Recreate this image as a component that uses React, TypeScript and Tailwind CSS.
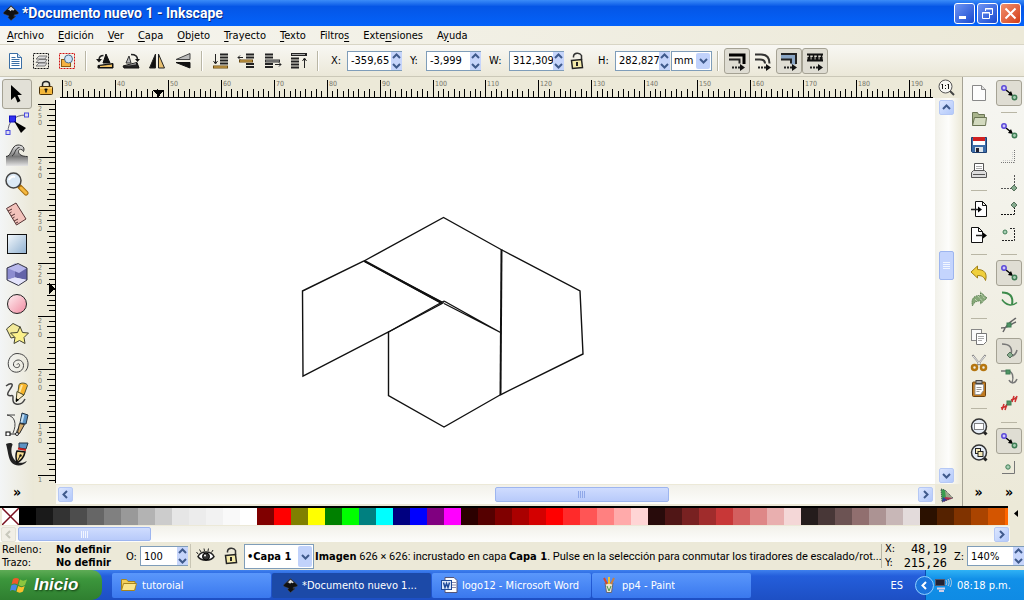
import { useState } from 'react';
import type { ReactNode } from 'react';

type Kids = { children?: ReactNode };

function Icon({ children }: Kids) {
  return (
    <svg viewBox="0 0 24 24" className="size-6 shrink-0" fill="none" stroke="#222" aria-hidden="true">
      {children}
    </svg>
  );
}

/* ---------- toolbar icons ---------- */

const DocIcon = () => (
  <Icon>
    <path d="M6.500 4.500h8l4 4v11h-12z" fill="#fff" stroke="#3a6ea5" />
    <path d="M14.500 4.500v4h4" fill="#cfe0f2" stroke="#3a6ea5" />
    <path d="M8.500 8.500h4M8.500 10.500h8M8.500 12.500h8M8.500 14.500h8M8.500 16.500h8" stroke="#3a6ea5" />
  </Icon>
);
const LayersIcon = () => (
  <Icon>
    <rect x="4.500" y="4.500" width="15" height="15" strokeDasharray="2 1" stroke="#111" />
    <path d="M7 17l3-3h8l-2 3zM7 13.500l3-3h8l-2 3zM7 10l3-3h8l-2 3z" fill="#ddd" stroke="#777" />
  </Icon>
);
const SelectSameIcon = () => (
  <Icon>
    <rect x="4.500" y="4.500" width="15" height="15" strokeDasharray="2 1" stroke="#d01010" />
    <rect x="6.500" y="10.500" width="9" height="7" fill="#f5b040" stroke="#8a5a10" />
    <circle cx="13.500" cy="10" r="4" fill="#cfe4f7" stroke="#4a6a8a" />
  </Icon>
);
const RotateLeftIcon = () => (
  <Icon>
    <path d="M13 5l4 9H10z" fill="#111" stroke="#111" />
    <path d="M5 16.500l15-2v4.500H5z" fill="#111" stroke="#111" />
    <path d="M7 17l12-1.500V18H7z" fill="#f0c060" stroke="none" />
    <path d="M6 11c0-3.500 2-4.500 4.500-4.500" strokeWidth="1.500" />
    <path d="M3 10h6l-3 3.500z" fill="#111" stroke="none" />
  </Icon>
);
const RotateRightIcon = () => (
  <Icon>
    <path d="M10 7l2 7H7z" fill="#bbb" stroke="#333" />
    <path d="M4 17l14-3.500 2 5.500H5z" fill="#222" stroke="#111" />
    <path d="M6 17l11-3v1.500z" fill="#999" stroke="none" />
    <path d="M12 5.500c4 0 6.500 1 6.500 5" strokeWidth="1.500" />
    <path d="M16 10h5l-2.500 3z" fill="#111" stroke="none" />
  </Icon>
);
const FlipHIcon = () => (
  <Icon>
    <path d="M10.500 5v14H4.500z" fill="#111" />
    <path d="M13.500 5v14h6z" fill="#e8c070" />
  </Icon>
);
const FlipVIcon = () => (
  <Icon>
    <path d="M19 4.500v6H5z" fill="#bbb" stroke="#444" />
    <path d="M5 13.500h14v5.500z" fill="#111" stroke="#111" />
  </Icon>
);
const ToBottomIcon = () => (
  <Icon>
    <path d="M6.500 5v9M4.500 12l2 3 2-3" />
    <path d="M11 5.500h8M11 8.500h8M11 11.500h8M11 14.500h8" strokeWidth="2" />
    <path d="M4 18h15" stroke="#6a4a10" strokeWidth="3" />
    <path d="M5 18h13" stroke="#f0c060" />
  </Icon>
);
const LowerIcon = () => (
  <Icon>
    <path d="M11 5.500h8M11 8.500h8M11 15h8M11 18h8" strokeWidth="2" />
    <path d="M4 12h14" stroke="#6a4a10" strokeWidth="3" />
    <path d="M5 12h12" stroke="#f0c060" />
    <path d="M3 8.500h5M5 6.500L3 8.500l2 2" />
  </Icon>
);
const RaiseIcon = () => (
  <Icon>
    <path d="M4 5.500h8M4 8.500h8M4 15h8M4 18h8" strokeWidth="2" />
    <path d="M4 12h15" stroke="#333" strokeWidth="3" />
    <path d="M5 12h13" stroke="#aaa" />
    <path d="M14 15.500h6M18 13.500l2 2-2 2" />
  </Icon>
);
const ToTopIcon = () => (
  <Icon>
    <path d="M4 5.500h16" strokeWidth="3" />
    <path d="M5 5.500h13" stroke="#aaa" />
    <path d="M4 9.500h8M4 12.500h8M4 15.500h8M4 18.500h8" strokeWidth="2" />
    <path d="M17.500 19v-9M15.500 12l2-3 2 3" />
  </Icon>
);
const OpenLockIcon = () => (
  <Icon>
    <path d="M8.500 8.500V7c.5-3 6-4 8-.5V11" stroke="#333" strokeWidth="1.500" />
    <path d="M6.500 11.500l10-1 1 8-10 1z" fill="#f3e9a8" stroke="#222" strokeWidth="1.500" />
    <path d="M12 13v4" stroke="#222" strokeWidth="2" />
  </Icon>
);
const DashArrow = () => (
  <>
    <path d="M7 18.500h8" strokeDasharray="2 1" strokeWidth="2" />
    <path d="M15 15l5 3.500-5 3.500z" fill="#111" stroke="none" />
  </>
);
const ScaleStrokeIcon = () => (
  <Icon>
    <path d="M4 6h15v9" stroke="#000" strokeWidth="3" />
    <path d="M4 10.500h10.500v4" strokeWidth="2" />
    <DashArrow />
  </Icon>
);
const ScaleRadiiIcon = () => (
  <Icon>
    <path d="M4 5.500h6c6 0 8.500 4 8.500 9" stroke="#333" strokeWidth="2" />
    <path d="M4 10.500h5c4 0 5 2 5 4" stroke="#333" strokeWidth="2" />
    <DashArrow />
  </Icon>
);
const MoveGradientIcon = () => (
  <Icon>
    <path d="M4 5.500h15v10h-5v-5H4z" fill="#89a5c5" stroke="none" />
    <path d="M4 5h15v10M4 10.500h10v4" stroke="#222" strokeWidth="2" />
    <DashArrow />
  </Icon>
);
const MovePatternIcon = () => (
  <Icon>
    <path d="M4 5.500h16M4 11.500h16" stroke="#111" strokeWidth="2" />
    <path d="M6.500 6v6M10.500 6v6M14.500 6v6M18.500 6v6" stroke="#111" strokeWidth="1.500" />
    <path d="M4.500 9.500h4M8.500 9.500h4M12.500 9.500h4M16.500 9.500h4" stroke="#111" strokeWidth="3" strokeDasharray="3 1" />
    <DashArrow />
  </Icon>
);

/* ---------- toolbox icons ---------- */

const PointerIcon = () => (
  <Icon>
    <path d="M6 3l11 10h-4.500l3 6-3 1.500-2.500-6-4 3.500z" fill="#000" stroke="none" />
  </Icon>
);
const NodeIcon = () => (
  <Icon>
    <path d="M3 20C3 10 9 3 21 3" stroke="#667" />
    <rect x="1" y="18.500" width="4" height="4" fill="#dde" stroke="#4a4ae0" />
    <rect x="19.500" y="1" width="4" height="4" fill="#dde" stroke="#4a4ae0" />
    <rect x="4.500" y="4" width="6" height="6" fill="#3030f0" stroke="#1010c0" />
    <path d="M9 9l12 7-5 5z" fill="#000" stroke="none" />
  </Icon>
);
const TweakIcon = () => (
  <Icon>
    <defs>
      <linearGradient id="wave" x1="0" y1="0" x2="0" y2="1">
        <stop offset="0" stopColor="#e4e4e4" />
        <stop offset="0.550" stopColor="#777" />
        <stop offset="1" stopColor="#e4e4e4" />
      </linearGradient>
    </defs>
    <path d="M1 14.500c6 0 5-11.500 12-11.500 5 0 7 3 5.500 6-1-4-6-3-5 1 1 3 4 4.500 9.500 4.500V24H1z" fill="url(#wave)" stroke="none" />
    <path d="M1 14.500c6 0 5-11.500 12-11.500 5 0 7 3 5.500 6.500-1-.5-1-2-2-2.500M22.500 14.500c-5.500 0-9-2-9-5 0-2 2-3 3.500-1.500M7 14c3-1 3-8.500 7.500-8.500" stroke="#333" />
  </Icon>
);
const ZoomIcon = () => (
  <Icon>
    <path d="M15 15l6 6" stroke="#a87010" strokeWidth="5" strokeLinecap="round" />
    <path d="M16 16l5 5" stroke="#f5b840" strokeWidth="3" strokeLinecap="round" />
    <circle cx="8.500" cy="8.500" r="7.500" fill="#dbe9f6" stroke="#444" strokeWidth="1.500" />
    <path d="M4 8c1-3 4-4 6-3" stroke="#fff" strokeWidth="2" />
  </Icon>
);
const MeasureIcon = () => (
  <Icon>
    <path d="M1.500 6.500L11 1l10 16-9.500 6z" fill="#f2c2bb" stroke="#533" />
    <path d="M3 9l4-2M4.500 11.500l2-1.500M6 14l4-2M7.500 16.500l2-1.500M9 19l4-2M11 21l2-1" stroke="#533" />
  </Icon>
);
const RectIcon = () => (
  <Icon>
    <defs>
      <linearGradient id="rectFill" x1="0" y1="0" x2="1" y2="1">
        <stop offset="0" stopColor="#f4f9fd" />
        <stop offset="1" stopColor="#8fb0d0" />
      </linearGradient>
    </defs>
    <rect x="2.500" y="2.500" width="19" height="19" fill="url(#rectFill)" stroke="#111" />
  </Icon>
);
const BoxIcon = () => (
  <Icon>
    <path d="M2 6l8-4.500v14L2 18z" fill="#8c8cd0" stroke="none" />
    <path d="M10 1.500L22 6v12l-12-2.500z" fill="#6464a8" stroke="none" />
    <path d="M10 1.500L22 6l-8 5-12-5z" fill="#b8b8ec" stroke="none" />
    <path d="M2 18l8-2.500L22 18l-9 5.500z" fill="#e4e4fc" stroke="none" />
    <path d="M13 1.500L22 6v12l-8.500 5.500L2 18V6z" stroke="#334" />
  </Icon>
);
const CircleIcon = () => (
  <Icon>
    <defs>
      <linearGradient id="ball" x1="0" y1="0" x2="1" y2="1">
        <stop offset="0" stopColor="#fff0f2" />
        <stop offset="1" stopColor="#f08aa0" />
      </linearGradient>
    </defs>
    <circle cx="12" cy="12" r="9.500" fill="url(#ball)" stroke="#222" />
  </Icon>
);
const StarIcon = () => (
  <Icon>
    <path d="M1.500 7L8 1.500 15 5v9l-9 2z" fill="#f3ea9a" stroke="#443" />
    <path d="M15 4.500l2.500 6 6 .5-4.500 4.500 1 6-5.500-3-5.500 3 1-6L5.500 11l7-.5z" fill="#fbf08a" stroke="#443" />
  </Icon>
);
const SpiralIcon = () => (
  <Icon>
    <path d="M12 12.500c1.500-2 3 0 2.500 1.500-1 2.500-5.500 2-6-1-.5-4 4-6 7-4.500 4 2 4 8 0 10.500-5 3-11 0-12-5C2 8 6.500 1.500 12 1.500c7 0 11.500 5 11 11.500-.2 3-1.500 5-3 6.500" stroke="#444" />
  </Icon>
);
const PencilIcon = () => (
  <Icon>
    <path d="M1 4c4-3 7-3 6 0S1 11 3 13s5-1 5 2-1 6 3 7 7-1 9-5" stroke="#444" strokeWidth="1.500" />
    <path d="M14 2.500C16 0 22 1 22.500 3.500L19 13l-7 4z" fill="#f7b52c" stroke="#553" />
    <path d="M17 3l-4 11" stroke="#fde6a0" strokeWidth="2" />
    <path d="M12 9.500l-1 10 8-6.500z" fill="#fbeac0" stroke="#442" />
    <path d="M11 16v4l3-2z" fill="#000" stroke="none" />
  </Icon>
);
const BezierIcon = () => (
  <Icon>
    <path d="M2 3c8 1 10 9 6 18M2 3h8M12 22c-2-3 3-6 3-10" stroke="#444" />
    <path d="M4 22h9" />
    <rect x="1" y="20" width="4" height="4" fill="#fff" stroke="#000" />
    <path d="M17 1l6 2-2 9-6-1z" fill="#5b93c4" stroke="#234" />
    <path d="M18.500 2.500l-2 8" stroke="#c5dff2" strokeWidth="2" />
    <path d="M14.500 11.500l5 1-5 9-2-1z" fill="#d8b070" stroke="#222" />
    <circle cx="12" cy="22" r="1.500" fill="#fff" />
  </Icon>
);
const CalligraphyIcon = () => (
  <Icon>
    <path d="M1 2c4-2 8-1 6 2-2 7 1 13 5 16 4 2 8 0 10-1-3 5-11 6-15 2C3 17 3 8 1 2z" fill="#222" stroke="none" />
    <path d="M14 1h9l-2 6-7-1z" fill="#5b93c4" stroke="#234" />
    <path d="M13 6.500l8 1.500" stroke="#c82020" strokeWidth="2" />
    <path d="M12 9l8 1c-1 5-3 8-8 11-1-4-2-8 0-12z" fill="#f7dc90" stroke="#111" strokeWidth="1.500" />
    <path d="M12 20l3-6" stroke="#111" />
    <circle cx="15.500" cy="13.500" r="1.200" fill="#111" stroke="none" />
  </Icon>
);

/* ---------- command bar icons ---------- */

const NewIcon = () => (
  <Icon>
    <path d="M5.500 4.500h9l4 4v11h-13z" fill="#fdfdfd" stroke="#888" />
    <path d="M14.500 4.500v4h4" fill="#ddd" stroke="#888" />
  </Icon>
);
const OpenIcon = () => (
  <Icon>
    <path d="M5.500 18.500v-13h5l1 2h6v3" fill="#a9b48c" stroke="#6a7454" />
    <path d="M5.500 18.500l2-8h12l-1 8z" fill="#d3dabf" stroke="#6a7454" />
  </Icon>
);
const SaveIcon = () => (
  <Icon>
    <path d="M4.500 4.500h15v15h-14l-1-1z" fill="#3c6ca8" stroke="#1e3f70" />
    <rect x="6" y="5" width="12" height="7" fill="#fff" stroke="none" />
    <rect x="6" y="4" width="12" height="4" fill="#d02020" stroke="none" />
    <rect x="8" y="14" width="8" height="5" fill="#dde4ea" stroke="none" />
    <rect x="9" y="15" width="3" height="4" fill="#223" stroke="none" />
  </Icon>
);
const PrintIcon = () => (
  <Icon>
    <path d="M7.500 12V4.500h9V12" fill="#fff" stroke="#555" />
    <path d="M9 7.500h6M9 9.500h6" stroke="#aaa" />
    <path d="M4.500 13.500l2-2h11l2 2v5h-15z" fill="#ddd" stroke="#555" />
    <path d="M6 15.500h12" stroke="#555" />
  </Icon>
);
const ImportIcon = () => (
  <Icon>
    <path d="M8.500 4.500h7l4 4v11h-11z M15.500 4.500v4h4" fill="#fff" stroke="#111" />
    <path d="M4 12.500h9" strokeWidth="1.500" />
    <path d="M11 9.500l4 3-4 3z" fill="#000" stroke="none" />
  </Icon>
);
const ExportIcon = () => (
  <Icon>
    <path d="M4.500 4.500h7l4 4v11h-11z M11.500 4.500v4h4" fill="#fff" stroke="#111" />
    <path d="M9 12.500h8" strokeWidth="1.500" />
    <path d="M16 9.500l4 3-4 3z" fill="#000" stroke="none" />
  </Icon>
);
const UndoIcon = () => (
  <Icon>
    <path d="M4 11l6.500-6v3.500c7 0 10 4 8 11-1.500-4-4-5-8-5V17z" fill="#f0cf3c" stroke="#a08018" />
  </Icon>
);
const RedoIcon = () => (
  <Icon>
    <path d="M20 11l-6.500-6v3.500C7 8 3.500 12 5.500 19c1.500-4 4-5 8-5v3z" fill="#86a878" stroke="#4c7444" strokeDasharray="1 1" />
    <path d="M8 12l3 3M11 9l5 6M14 7l4 5" stroke="#d5e3cc" strokeDasharray="1 1" />
  </Icon>
);
const CopyIcon = () => (
  <Icon>
    <rect x="4.500" y="4.500" width="10" height="11" fill="#fafafa" stroke="#888" />
    <path d="M9.500 8.500h10v8l-3 3h-7z" fill="#fff" stroke="#777" />
    <path d="M11 11.500h6M11 13.500h6M11 15.500h4" stroke="#aaa" />
  </Icon>
);
const CutIcon = () => (
  <Icon>
    <path d="M5.500 4l8 10M18.500 4l-8 10" stroke="#888" strokeWidth="2" />
    <path d="M6 5l7 8M18 5l-7 8" stroke="#eee" />
    <circle cx="7.500" cy="16.500" r="2.500" stroke="#b57610" strokeWidth="2.500" />
    <circle cx="16.500" cy="16.500" r="2.500" stroke="#b57610" strokeWidth="2.500" />
  </Icon>
);
const PasteIcon = () => (
  <Icon>
    <rect x="5.500" y="5" width="13" height="14.500" rx="1" fill="#c07a20" stroke="#6a4210" />
    <path d="M8 7.500h8.500v6l-3 4H8z" fill="#fff" stroke="#999" />
    <path d="M9.500 10.500h5M9.500 12.500h5M9.500 14.500h3" stroke="#999" />
    <rect x="9" y="3.500" width="6" height="3" fill="#aaa" stroke="#444" />
  </Icon>
);
const ZoomSelIcon = () => (
  <Icon>
    <path d="M16 16l3.500 3.500" stroke="#222" strokeWidth="3" />
    <circle cx="12" cy="11.500" r="7.500" fill="#e6edf6" stroke="#333" strokeWidth="1.500" />
    <rect x="7.500" y="8.500" width="9" height="6" fill="#fff" stroke="#111" strokeDasharray="1 1" />
  </Icon>
);
const ZoomDrawIcon = () => (
  <Icon>
    <path d="M16 16l3.500 3.500" stroke="#222" strokeWidth="3" />
    <circle cx="12" cy="11.500" r="7.500" fill="#e6edf6" stroke="#333" strokeWidth="1.500" />
    <rect x="8.500" y="7.500" width="5" height="5" fill="#f5e9b8" stroke="#222" />
    <rect x="11" y="10.500" width="5" height="5" fill="#f5e9b8" stroke="#222" />
  </Icon>
);

/* ---------- snap bar icons ---------- */

const SnapIcon = () => (
  <Icon>
    <path d="M9 9l5 4" stroke="#000" strokeWidth="1.500" />
    <path d="M16 15l-5-1 3-4z" fill="#000" stroke="none" />
    <circle cx="7" cy="7" r="2.200" fill="#cfc9fa" stroke="#5a48d8" strokeWidth="1.500" />
    <circle cx="17.500" cy="16.500" r="2.200" fill="#a8cfb4" stroke="#3f7d55" strokeWidth="1.500" />
  </Icon>
);
const Diamond = ({ x, y }: { x: number; y: number }) => (
  <path d={`M${x} ${y - 3}l3 3-3 3-3-3z`} fill="#86ab8e" stroke="#55705a" />
);
const SnapBoxIcon = () => (
  <Icon>
    <path d="M17.500 5v12.500M4 17.500h13" stroke="#777" strokeDasharray="1 1" />
    <path d="M15.500 7v8.500M6 15.500h9" stroke="#ccc" strokeDasharray="1 1" />
  </Icon>
);
const SnapCornerIcon = () => (
  <Icon>
    <path d="M17.500 4v10M4 17.500h11" stroke="#555" strokeDasharray="2 1" />
    <Diamond x={17} y={17} />
  </Icon>
);
const SnapEdgeIcon = () => (
  <Icon>
    <path d="M17.500 10v7.500M4 17.500h13" stroke="#111" strokeDasharray="2 1" />
    <Diamond x={17} y={8} />
  </Icon>
);
const SnapCenterIcon = () => (
  <Icon>
    <path d="M13 5.500h4.500v12H4" stroke="#222" strokeDasharray="2 1" />
    <circle cx="8" cy="9" r="2" fill="#a8cfb4" stroke="#3f7d55" />
  </Icon>
);
const SnapPathIcon = () => (
  <Icon>
    <path d="M5 5.500c8 0 11.500 4 10 12" stroke="#3c8a4a" strokeWidth="2" />
    <path d="M5 12.500c4 6 10 7 15 3" stroke="#3c8a4a" strokeWidth="1.500" />
  </Icon>
);
const SnapCrossIcon = () => (
  <Icon>
    <path d="M4 15c8 0 9-4 15-6M6 19c3-7 6-9 13-14" stroke="#666" strokeWidth="1.500" />
    <rect x="10" y="10" width="4" height="4" fill="#4f9463" stroke="#3f7d55" />
  </Icon>
);
const SnapCuspIcon = () => (
  <Icon>
    <path d="M5 5c7 0 11 3 9 11M14 17c3 0 5-2 6-6" stroke="#777" strokeWidth="1.500" />
    <Diamond x={13} y={16} />
  </Icon>
);
const SnapSmoothIcon = () => (
  <Icon>
    <path d="M4 6h6c6 0 7 6 5 12M12 15c2 4 6 4 8-1" stroke="#777" strokeWidth="1.500" />
    <rect x="9" y="5" width="4" height="4" fill="#4f9463" stroke="#3f7d55" />
  </Icon>
);
const SnapMidIcon = () => (
  <Icon>
    <path d="M5 18L19 6" stroke="#777" />
    <path d="M5 19l2-6M8 19l2-6M4 17l6-2M15 11l2-6M18 11l2-6M14 9l6-2" stroke="#d03030" strokeWidth="1.500" />
    <rect x="10" y="10" width="4" height="4" fill="#4f9463" stroke="#3f7d55" />
  </Icon>
);
const SnapPageIcon = () => (
  <Icon>
    <path d="M17.500 6v12.500H5" stroke="#777" />
    <circle cx="11" cy="12" r="2.200" fill="#a8cfb4" stroke="#3f7d55" />
  </Icon>
);

/* ---------- other glyphs ---------- */

const InkscapeLogo = ({ className }: { className: string }) => (
  <svg viewBox="0 0 16 16" className={className} aria-hidden="true">
    <path d="M8 .5l7 6.500c1 1 .5 2-.8 2.300l-3.200.7 1.500 1.700L8 15.500 5 12.500 6 11 1.800 9.300C.5 9 0 8 1 7z" fill="#111" stroke="#555" strokeWidth=".5" />
    <path d="M8 1.500l3.500 3.200-1.500 1-1-1-1.500 1.500-1.500-1.500-1.300.3z" fill="#ddd" />
    <path d="M10 10.500l3 .8-2 1z" fill="#333" />
  </svg>
);

const EyeIcon = () => (
  <Icon>
    <path d="M4 12.500c3-6 13-6 16 0-3 5-13 5-16 0z" fill="#fff" stroke="#222" strokeWidth="1.500" />
    <circle cx="12" cy="12.500" r="3.500" fill="#333" stroke="#000" />
    <path d="M4 10L2.500 8M7 8L5.500 5.500M10.500 7L10 4.500M14 7l.5-2.500M17.500 8.500L19 6" />
    <circle cx="11" cy="11.500" r="1" fill="#fff" stroke="none" />
  </Icon>
);

const ClosedLock = () => (
  <svg viewBox="0 0 16 16" className="size-4" aria-hidden="true">
    <path d="M4.500 8V4.500a3.500 3 0 0 1 7 0V8" fill="none" stroke="#222" strokeWidth="1.500" />
    <rect x="1.500" y="6.500" width="13" height="8" rx="1" fill="#f3b73a" stroke="#4a3008" />
    <path d="M2 8h12" stroke="#fbe09a" />
    <path d="M8 8.500v4M6.500 9.500h3" stroke="#111" strokeWidth="1.500" />
  </svg>
);

const Chevron = ({ dir, dim }: { dir: 'up' | 'down' | 'left' | 'right'; dim?: boolean }) => {
  const d = {
    up: 'M1 6l3.500-3.500L8 6',
    down: 'M1 3l3.500 3.500L8 3',
    left: 'M6 1L2.500 4.500 6 8',
    right: 'M3 1l3.500 3.500L3 8',
  }[dir];
  return (
    <svg viewBox="0 0 9 9" className="size-[9px]" aria-hidden="true">
      <path d={d} fill="none" stroke={dim ? '#c8c8bc' : '#3f5a8c'} strokeWidth="2" />
    </svg>
  );
};

/* ---------- controls ---------- */

function ScrollButton({ dir, dim }: { dir: 'up' | 'down' | 'left' | 'right'; dim?: boolean }) {
  return (
    <button
      aria-label={`Desplazar ${dir}`}
      disabled={dim}
      className={
        'flex size-[15px] shrink-0 items-center justify-center rounded-[2px] border ' +
        (dim ? 'border-[#e4e2d6] bg-[#f1efe6]' : 'border-[#b5c8f5] bg-linear-to-br from-[#dce6fe] to-[#b3c9fb]')
      }
    >
      <Chevron dir={dir} dim={dim} />
    </button>
  );
}

function Spin({ id, label, value, width, lead }: { id: string; label: string; value: string; width: string; lead?: string }) {
  const [v, setV] = useState(value);
  return (
    <div className="flex shrink-0 items-center">
      <label htmlFor={id} className={lead}>{label}</label>
      <div className="flex h-5 items-stretch border border-[#7f9db9] border-r-0 bg-white">
        <input id={id} value={v} onChange={(e) => setV(e.target.value)} className={'min-w-0 bg-white pl-[3px] outline-none ' + width} />
        <div className="flex w-[11px] flex-col bg-[#c6d5fb]">
          <button aria-label={`Aumentar ${label}`} className="flex flex-1 items-center justify-center"><Chevron dir="up" /></button>
          <button aria-label={`Disminuir ${label}`} className="flex flex-1 items-center justify-center"><Chevron dir="down" /></button>
        </div>
      </div>
    </div>
  );
}

function Picker({ label, options, className, bold }: { label: string; options: string[]; className: string; bold?: boolean }) {
  return (
    <div className={'relative shrink-0 border border-[#7f9db9] bg-white ' + className}>
      <select aria-label={label} className={'size-full appearance-none bg-transparent pl-[2px] outline-none ' + (bold ? 'font-bold' : '')}>
        {options.map((o) => <option key={o}>{o}</option>)}
      </select>
      <span className="pointer-events-none absolute inset-y-px right-px flex w-[14px] items-center justify-center rounded-[2px] bg-[#c1d2fb]">
        <Chevron dir="down" />
      </span>
    </div>
  );
}

const VSep = () => <div className="mx-[5px] h-5 w-[2px] shrink-0 border-l border-[#b9b6a5] bg-white" />;

function ToolButton({ name, on, children }: Kids & { name: string; on?: boolean }) {
  return (
    <button
      aria-label={name}
      aria-pressed={on}
      className={
        'flex h-[26px] w-[26px] shrink-0 items-center justify-center rounded-[3px] border ' +
        (on ? 'border-[#a5a294] bg-[#dfddd3]' : 'border-transparent')
      }
    >
      {children}
    </button>
  );
}

const more = 'mt-auto mb-[6px] h-4 text-center text-[14px] leading-4 font-bold';

function SideBar({ items, label, className }: { items: [string, ReactNode, boolean?][]; label: string; className: string }) {
  return (
    <aside aria-label={label} className={'flex shrink-0 flex-col items-center pt-[3px] ' + className}>
      {items.map(([name, icon, on], i) =>
        name === '-' ? (
          <div key={i} className="flex h-3 shrink-0 items-center"><div className="w-4 border-t border-[#b9b6a5]" /></div>
        ) : (
          <ToolButton key={i} name={name} on={on}>{icon}</ToolButton>
        ),
      )}
      <button aria-label="Más" className={more}>»</button>
    </aside>
  );
}

/* ---------- rulers ---------- */

const STEP = 5.293;

function HRuler() {
  const ticks = Array.from({ length: 165 }, (_, i) => i);
  return (
    <svg className="h-[22px] w-full" aria-label="Regla horizontal" shapeRendering="crispEdges">
      <path d="M4 21.500H877" stroke="#000" />
      {ticks.map((i) => {
        const x = Math.round(6 + i * STEP) + 0.5;
        return <path key={i} d={`M${x} ${i % 10 === 0 ? 4 : i % 2 === 0 ? 13 : 15}V21`} stroke="#000" />;
      })}
      {ticks.filter((i) => i % 10 === 0).map((i) => (
        <text key={i} x={Math.round(8 + i * STEP)} y="10" fontSize="7" fill="#77756a">{30 + i}</text>
      ))}
      <path d="M97 14h11l-5.500 7z" fill="#000" />
    </svg>
  );
}

function VRuler() {
  const ticks = Array.from({ length: 72 }, (_, i) => i);
  const labels = ['250', '240', '230', '220', '210', '200', '190', '1'];
  return (
    <svg className="h-full w-[22px]" aria-label="Regla vertical" shapeRendering="crispEdges">
      <path d="M21.500 2V385" stroke="#000" />
      {ticks.map((i) => {
        const y = Math.round(6 + i * STEP) + 0.5;
        return <path key={i} d={`M${i % 10 === 0 ? 4 : i % 2 === 0 ? 13 : 15} ${y}H21`} stroke="#000" />;
      })}
      {labels.map((l, i) =>
        l.split('').map((c, j) => (
          <text key={`${i}-${j}`} x="4" y={Math.round(13 + i * 10 * STEP + j * 7)} fontSize="7" fill="#77756a">{c}</text>
        )),
      )}
      <path d="M15 185v11l6-5.500z" fill="#000" />
    </svg>
  );
}

/* ---------- data ---------- */

const menus: [string, string, string][] = [
  ['', 'A', 'rchivo'], ['', 'E', 'dición'], ['', 'V', 'er'], ['', 'C', 'apa'], ['', 'O', 'bjeto'], ['', 'T', 'rayecto'],
  ['', 'T', 'exto'], ['Filtro', 's', ''], ['Exte', 'n', 'siones'], ['A', 'y', 'uda'],
];

const tools: [string, ReactNode][] = [
  ['Seleccionar', <PointerIcon />], ['Nodos', <NodeIcon />], ['Retocar', <TweakIcon />], ['Zoom', <ZoomIcon />],
  ['Medir', <MeasureIcon />], ['Rectángulo', <RectIcon />], ['Caja 3D', <BoxIcon />], ['Círculo', <CircleIcon />],
  ['Estrella', <StarIcon />], ['Espiral', <SpiralIcon />], ['Lápiz', <PencilIcon />], ['Pluma', <BezierIcon />],
  ['Caligrafía', <CalligraphyIcon />],
];

const commands: [string, ReactNode, boolean?][] = [
  ['Nuevo', <NewIcon />], ['Abrir', <OpenIcon />], ['Guardar', <SaveIcon />], ['Imprimir', <PrintIcon />], ['-', null],
  ['Importar', <ImportIcon />], ['Exportar', <ExportIcon />], ['-', null],
  ['Deshacer', <UndoIcon />], ['Rehacer', <RedoIcon />], ['-', null],
  ['Copiar', <CopyIcon />], ['Cortar', <CutIcon />], ['Pegar', <PasteIcon />], ['-', null],
  ['Ajustar selección', <ZoomSelIcon />], ['Ajustar dibujo', <ZoomDrawIcon />],
];

const snaps: [string, ReactNode, boolean?][] = [
  ['Activar ajuste', <SnapIcon />, true], ['-', null],
  ['Ajustar cajas', <SnapIcon />], ['Bordes', <SnapBoxIcon />], ['Esquinas', <SnapCornerIcon />],
  ['Puntos medios', <SnapEdgeIcon />], ['Centros', <SnapCenterIcon />], ['-', null],
  ['Ajustar nodos', <SnapIcon />, true], ['Trayectos', <SnapPathIcon />], ['Intersecciones', <SnapCrossIcon />],
  ['Nodos en vértice', <SnapCuspIcon />, true], ['Nodos suaves', <SnapSmoothIcon />], ['Puntos medios de línea', <SnapMidIcon />],
  ['-', null], ['Ajustar otros', <SnapIcon />, true], ['Página', <SnapPageIcon />],
];

const swatches = (
  '000000 1a1a1a 333333 4d4d4d 666666 808080 999999 b3b3b3 cccccc e6e6e6 ececec f2f2f2 f9f9f9 ffffff ' +
  '800000 ff0000 808000 ffff00 008000 00ff00 008080 00ffff 000080 0000ff 800080 ff00ff ' +
  '2b0000 550000 800000 aa0000 d40000 ff0000 ff2a2a ff5555 ff8080 ffaaaa ffd5d5 ' +
  '280b0b 501616 782121 a02c2c c83737 d35f5f de8787 e9afaf f4d7d7 ' +
  '241c1c 483737 6c5353 916f6f ac9393 c8b7b7 e3dbdb 2b1100 552200 803300 aa4400 d45500 ff6600'
).split(' ');

const winBtn = 'flex size-[21px] items-center justify-center rounded-[3px] border border-white';
const taskBtn = 'flex h-[25px] w-[159px] min-w-0 items-center gap-1 rounded-[2px] pl-2 text-left text-white ';
const mono = "text-right font-['DejaVu_Sans_Mono',monospace] text-[12px] leading-[14px]";

/* ---------- page ---------- */

export default function App() {
  return (
    <div className="flex h-screen min-h-[560px] w-full flex-col overflow-hidden bg-[#ece9d8] font-['DejaVu_Sans_Condensed','DejaVu_Sans',sans-serif] text-[11px] leading-[13px] text-black">
      <header className="flex h-[26px] shrink-0 items-center bg-linear-to-b from-[#3b8cf8] via-[#0556e6] via-25% to-[#0462fa] px-[3px]">
        <InkscapeLogo className="size-4" />
        <h1 className="ml-[3px] font-['Roboto',sans-serif] text-[14px] leading-5 font-bold text-white [text-shadow:1px_1px_#0a2a80]">
          *Documento nuevo 1 - Inkscape
        </h1>
        <div className="ml-auto flex gap-[2px]">
          <button aria-label="Minimizar" className={winBtn + ' bg-linear-to-br from-[#6f94f3] to-[#1947cf]'}>
            <svg viewBox="0 0 19 19" className="size-[19px]"><path d="M4 13.500h7" stroke="#fff" strokeWidth="3" /></svg>
          </button>
          <button aria-label="Restaurar" className={winBtn + ' bg-linear-to-br from-[#6f94f3] to-[#1947cf]'}>
            <svg viewBox="0 0 19 19" className="size-[19px]" fill="none" stroke="#fff">
              <path d="M7.500 7V4.500h7v6H12M7 5h8" /><path d="M4.500 8.500h7v6h-7zM4 9h8" />
            </svg>
          </button>
          <button aria-label="Cerrar" className={winBtn + ' bg-linear-to-br from-[#f0906c] to-[#d33a10]'}>
            <svg viewBox="0 0 19 19" className="size-[19px]"><path d="M4.500 4.500l10 10M14.500 4.500l-10 10" stroke="#fff" strokeWidth="2" /></svg>
          </button>
        </div>
      </header>

      <nav aria-label="Menú" className="flex h-[19px] shrink-0 items-center border-b border-[#d8d5c5] bg-linear-to-r from-[#f6f5ef] to-[#ece9d8]">
        {menus.map(([a, u, b], i) => (
          <button key={i} className="px-[7px]">{a}<span className="underline underline-offset-2">{u}</span>{b}</button>
        ))}
      </nav>

      <div role="toolbar" aria-label="Controles de selección" className="flex h-[32px] shrink-0 items-center border-b border-[#cbc8b8] bg-linear-to-b from-[#f8f7f3] to-[#ebe8d8] pl-[2px]">
        <ToolButton name="Seleccionar todo"><DocIcon /></ToolButton>
        <ToolButton name="Todas las capas"><LayersIcon /></ToolButton>
        <ToolButton name="Deseleccionar"><SelectSameIcon /></ToolButton>
        <VSep />
        <ToolButton name="Rotar a la izquierda"><RotateLeftIcon /></ToolButton>
        <ToolButton name="Rotar a la derecha"><RotateRightIcon /></ToolButton>
        <ToolButton name="Voltear horizontal"><FlipHIcon /></ToolButton>
        <ToolButton name="Voltear vertical"><FlipVIcon /></ToolButton>
        <VSep />
        <ToolButton name="Bajar al fondo"><ToBottomIcon /></ToolButton>
        <ToolButton name="Bajar"><LowerIcon /></ToolButton>
        <ToolButton name="Subir"><RaiseIcon /></ToolButton>
        <ToolButton name="Traer al frente"><ToTopIcon /></ToolButton>
        <VSep />
        <Spin id="x" label="X:" value="-359,65" width="w-[43px]" lead="w-[23px] pl-[7px]" />
        <Spin id="y" label="Y:" value="-3,999" width="w-[43px]" lead="w-6 pl-2" />
        <Spin id="w" label="W:" value="312,309" width="w-[43px]" lead="w-7 pl-2" />
        <ToolButton name="Bloquear proporción"><OpenLockIcon /></ToolButton>
        <Spin id="h" label="H:" value="282,827" width="w-[43px]" lead="w-[25px] pl-2" />
        <Picker label="Unidad" options={['mm', 'px', 'cm', 'pt']} className="ml-px h-5 w-[41px]" />
        <VSep />
        <ToolButton name="Escalar trazo" on><ScaleStrokeIcon /></ToolButton>
        <ToolButton name="Escalar radios"><ScaleRadiiIcon /></ToolButton>
        <ToolButton name="Mover degradados" on><MoveGradientIcon /></ToolButton>
        <ToolButton name="Mover patrones" on><MovePatternIcon /></ToolButton>
      </div>

      <main className="flex min-h-0 flex-1">
        <aside aria-label="Herramientas" className="flex w-[34px] shrink-0 flex-col items-center bg-linear-to-r from-[#f3f5f6] to-[#ebe8d7] pt-[2px]">
          {tools.map(([name, icon], i) => (
            <button key={name} aria-label={name} className={'flex size-[30px] shrink-0 items-center justify-center rounded-[3px] border ' + (i === 0 ? 'border-[#a5a294] bg-[#e2e0d7]' : 'border-transparent')}>
              {icon}
            </button>
          ))}
          <button aria-label="Más" className={more}>»</button>
        </aside>

        <div className="grid min-w-0 flex-1 grid-cols-[22px_minmax(0,1fr)_27px] grid-rows-[21px_minmax(0,1fr)_22px]">
          <button aria-label="Bloquear guías" className="flex items-center justify-center pl-[2px]"><ClosedLock /></button>
          <div className="flex items-end"><HRuler /></div>
          <button aria-label="Zoom 1:1" className="flex justify-center pt-[2px] pr-[5px]">
            <svg viewBox="0 0 17 17" className="size-[17px]" aria-hidden="true">
              <path d="M11 11l5 5" stroke="#444" strokeWidth="2" />
              <circle cx="7.500" cy="7.500" r="6.500" fill="#f6f6f2" stroke="#555" />
              <path d="M4.500 5v5M10.500 5v5M3.500 6l1-1M9.500 6l1-1M7.500 6v1M7.500 9v1" stroke="#111" fill="none" />
            </svg>
          </button>

          <div className="min-h-0 overflow-hidden"><VRuler /></div>
          <section aria-label="Lienzo" className="min-h-0 overflow-hidden bg-white">
            <svg className="size-full" fill="none" stroke="#111" strokeWidth="1.400" role="img" aria-label="Dibujo">
              <g transform="translate(-56 -98)">
                <path d="M302.500 291L364 261l79.500-43.500L501 249.500l79 41.500 3 63-83 41-56 32-55.500-31.500V332L303 376z" />
                <path d="M388.500 332L442 303.500 364 261" />
                <path d="M364 261L444 303M388.500 332L444 301" />
                <path d="M364.500 261L441 302.500" strokeWidth="2" />
                <path d="M444 301L500.500 332.500 444 303.500" />
                <path d="M501.500 249.500L500.500 395" strokeWidth="2" />
              </g>
            </svg>
          </section>
          <div className="flex flex-col items-center bg-linear-to-r from-[#f2f1ea] via-[#fdfdfb] to-[#ece9d8] pt-[2px] pb-[1px] pr-[5px]">
            <ScrollButton dir="up" />
            <div className="flex-[137]" />
            <div className="flex w-[15px] flex-[27] flex-col items-center justify-center gap-px rounded-[2px] border border-[#9db5ef] bg-[#c4d4fd]">
              {[0, 1, 2, 3].map((n) => <span key={n} className="h-px w-[7px] border-t border-[#f2f6ff]" />)}
            </div>
            <div className="flex-[189]" />
            <ScrollButton dir="down" />
          </div>

          <div />
          <div className="mt-px flex h-[19px] items-center bg-linear-to-b from-[#f2f1ea] to-[#fdfdfb] px-[2px]">
            <ScrollButton dir="left" />
            <div className="flex-[423]" />
            <div className="flex h-[15px] flex-[173] items-center justify-center gap-px rounded-[2px] border border-[#9db5ef] bg-linear-to-b from-[#cfdcfe] to-[#b8cafa]">
              {[0, 1, 2, 3].map((n) => <span key={n} className="h-[7px] w-px border-l border-[#8fa8e8]" />)}
            </div>
            <div className="flex-[250]" />
            <ScrollButton dir="right" />
          </div>
          <button aria-label="Gestión de color" className="flex items-center justify-center pr-[5px]">
            <svg viewBox="0 0 15 15" className="size-[15px]" aria-hidden="true">
              <path d="M2 1l4 1 3 6-6 6z" fill="#3a9c4e" />
              <path d="M6 2l8 8-7 1z" fill="#9aa88a" />
              <path d="M6 9l8 1-5 2-5 2z" fill="#b03050" />
              <path d="M3 14l1-5 4 3z" fill="#3040a0" />
              <path d="M2 1l4 1 8 8-11 4z" fill="none" stroke="#445" strokeDasharray="1 1" />
            </svg>
          </button>
        </div>

        <SideBar items={commands} label="Comandos" className="w-8 border-l border-[#a5a294] bg-linear-to-b from-[#f6f6f2] to-[#ece9d8]" />
        <SideBar items={snaps} label="Ajuste" className="w-[30px] bg-linear-to-b from-[#f6f6f2] to-[#ece9d8]" />
      </main>

      <section aria-label="Paleta" className="flex h-[20px] shrink-0 items-start">
        <div className="flex min-w-0 flex-1 overflow-hidden border-t-2 border-black pl-[2px]">
          <button aria-label="Ninguno" className="h-[17px] w-[17px] shrink-0 bg-white">
            <svg viewBox="0 0 17 17" className="size-[17px]"><path d="M0 0l17 17M17 0L0 17" stroke="#7a1020" strokeWidth="1.500" /></svg>
          </button>
          {swatches.map((c, i) => (
            <button key={i} aria-label={`#${c}`} className="h-[17px] w-[17px] shrink-0" style={{ backgroundColor: `#${c}` }} />
          ))}
        </div>
        <button aria-label="Opciones de paleta" className="flex h-3 w-4 items-center justify-center pt-[3px]">
          <svg viewBox="0 0 4 7" className="h-[7px] w-1"><path d="M4 0v7L0 3.500z" /></svg>
        </button>
      </section>

      <div className="mr-[14px] flex h-4 shrink-0 items-center bg-linear-to-b from-[#f2f1ea] to-[#fdfdfb] px-px">
        <ScrollButton dir="left" dim />
        <div className="ml-[2px] flex h-[14px] flex-[131] items-center justify-center gap-px rounded-[2px] border border-[#9db5ef] bg-linear-to-b from-[#cfdcfe] to-[#b8cafa]">
          {[0, 1, 2, 3].map((n) => <span key={n} className="h-[7px] w-px border-l border-[#f2f6ff]" />)}
        </div>
        <div className="flex-[844]" />
        <ScrollButton dir="right" />
      </div>

      <footer className="flex h-7 shrink-0 items-center">
        <dl className="grid shrink-0 grid-cols-[54px_70px] pl-[2px]">
          <dt>Relleno:</dt><dd className="font-bold">No definir</dd>
          <dt>Trazo:</dt><dd className="font-bold">No definir</dd>
        </dl>
        <Spin id="o" label="O:" value="100" width="w-9" lead="w-[14px]" />
        <div className="ml-[2px] h-6 w-px bg-[#c9c6b5]" />
        <button aria-label="Visibilidad de la capa" className="ml-[3px]"><EyeIcon /></button>
        <button aria-label="Bloqueo de la capa" className="mx-px"><OpenLockIcon /></button>
        <Picker label="Capa" options={['•Capa 1']} className="h-[25px] w-[70px]" bold />
        <p className="min-w-0 flex-1 whitespace-nowrap pl-px font-['Roboto',sans-serif]">
          <b className="font-['DejaVu_Sans_Condensed',sans-serif]">Imagen</b> 626 × 626: incrustado en capa{' '}
          <b className="font-['DejaVu_Sans_Condensed',sans-serif]">Capa 1</b>. Pulse en la selección para conmutar los tiradores de escalado/rot...
        </p>
        <div className="mx-[3px] h-6 w-px bg-[#b9b6a5]" />
        <dl className="grid w-[62px] shrink-0 grid-cols-[14px_1fr] leading-[14px]">
          <dt>X:</dt><dd className={mono}>48,19</dd>
          <dt>Y:</dt><dd className={mono}>215,26</dd>
        </dl>
        <Spin id="z" label="Z:" value="140%" width="w-[45px]" lead="w-5 pl-[7px]" />
      </footer>

      <div className="flex h-[30px] shrink-0 items-stretch bg-linear-to-b from-[#3f80ee] via-[#245edb] via-20% to-[#1d4fc4]">
        <button className="flex w-[102px] items-center gap-[6px] rounded-r-[10px] bg-linear-to-b from-[#5eac56] via-[#3c963c] via-30% to-[#2f7f30] pl-[10px] font-['Liberation_Sans',sans-serif] text-[17px] leading-5 font-bold text-white italic [text-shadow:1px_1px_2px_#123c12]">
          <svg viewBox="0 0 18 18" className="size-[18px]" aria-hidden="true">
            <path d="M3 3c2-1.500 4-1.500 6 0L7.500 8.500c-2-1.500-4-1.500-6 0z" fill="#f0592a" />
            <path d="M10 3.500c2 1.500 4 1.500 7 0L15 9c-2 1.500-4.500 1.500-6.500 0z" fill="#8cc63f" />
            <path d="M1.200 9.500c2-1.500 4-1.500 6 0L5.500 15c-2-1.500-4-1.500-5.500 0z" fill="#4a86e8" />
            <path d="M8.200 10c2 1.500 4.500 1.500 6.500 0L13 15.500c-2 1.500-4.500 1.500-6.500 0z" fill="#fbc02d" />
          </svg>
          Inicio
        </button>
        <div className="ml-[10px] flex min-w-0 items-center gap-px">
          <button className={taskBtn + 'bg-linear-to-b from-[#5a97fb] to-[#3a78ee]'}>
            <svg viewBox="0 0 18 16" className="h-4 w-[18px] shrink-0" aria-hidden="true">
              <path d="M1.500 13V2.500h5l1.500 2h7V13z" fill="#f3cf5a" stroke="#a8851c" />
              <path d="M1.500 13.500l2-7h13l-2 7z" fill="#fbe58a" stroke="#a8851c" />
            </svg>
            <span className="truncate">tutoroial</span>
          </button>
          <button className={taskBtn + 'bg-[#1c4aa8] pl-[11px]'}>
            <InkscapeLogo className="size-[15px] shrink-0" />
            <span className="truncate">*Documento nuevo 1...</span>
          </button>
          <button className={taskBtn + 'bg-linear-to-b from-[#5a97fb] to-[#3a78ee]'}>
            <svg viewBox="0 0 18 16" className="h-4 w-[18px] shrink-0" aria-hidden="true">
              <path d="M5 .5h9l3 3v12H5z" fill="#fff" stroke="#557" />
              <path d="M12 5.500h4M12 8h4M12 10.500h4" stroke="#88a" />
              <rect x="1.500" y="3.500" width="10" height="9" fill="#dce8fa" stroke="#1f4a98" />
              <path d="M3.500 5.500l1.500 5 1.500-4 1.500 4 1.500-5" fill="none" stroke="#1f4a98" strokeWidth="1.500" />
            </svg>
            <span className="truncate">logo12 - Microsoft Word</span>
          </button>
          <button className={taskBtn + 'bg-linear-to-b from-[#5a97fb] to-[#3a78ee]'}>
            <svg viewBox="0 0 18 16" className="h-4 w-[18px] shrink-0" aria-hidden="true">
              <path d="M5 6h8l-1.500 9.500h-5z" fill="#e8e4d0" stroke="#667" />
              <path d="M7 7L4 1" stroke="#d9482a" strokeWidth="2" />
              <path d="M9 7V0" stroke="#f0c030" strokeWidth="2" />
              <path d="M11 7l3-6" stroke="#c88040" strokeWidth="2" />
              <path d="M7 9l2 5M11 9l-2 5" stroke="#4a9a4a" />
            </svg>
            <span className="truncate">pp4 - Paint</span>
          </button>
        </div>
        <div className="ml-auto flex shrink-0 items-center text-white">
          <span className="pr-[22px]">ES</span>
          <div className="flex h-full w-[99px] items-center border-l border-[#0a4fb0] bg-linear-to-b from-[#2fb2f5] via-[#1190e8] via-30% to-[#0f8be4]">
            <button aria-label="Mostrar iconos" className="-ml-[11px] flex size-[19px] shrink-0 items-center justify-center rounded-full border border-[#8fd0ff] bg-[#1a74dc]">
              <svg viewBox="0 0 9 9" className="size-[9px]"><path d="M6 1L2.500 4.500 6 8" fill="none" stroke="#fff" strokeWidth="2" /></svg>
            </button>
            <svg viewBox="0 0 18 16" className="h-4 w-[18px] shrink-0" aria-hidden="true">
              <rect x="1.500" y="2.500" width="9" height="6" fill="#223" stroke="#556" />
              <path d="M3 11.500h8M5 14h5" stroke="#d0d0e8" strokeWidth="2" />
              <path d="M12 3c1 1.500 1 3.500 0 5M14 2c1.500 2 1.500 5 0 7M16 1c2 3 2 6 0 9" fill="none" stroke="#bcd" />
            </svg>
            <span className="ml-[5px] whitespace-nowrap">08:18 p.m.</span>
          </div>
        </div>
      </div>
    </div>
  );
}
